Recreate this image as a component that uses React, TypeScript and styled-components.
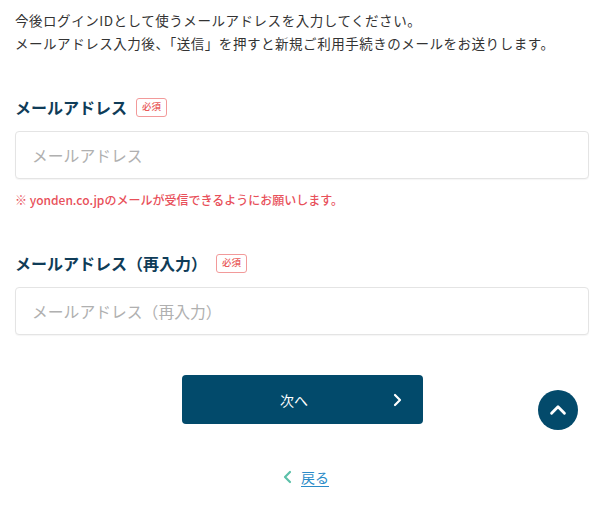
import React from 'react'
import styled, { createGlobalStyle } from 'styled-components'

const GlobalStyle = createGlobalStyle`
    html, body {
        margin: 0;
        padding: 0;
        background: #ffffff;
        font-family: "Noto Sans CJK JP", "Noto Sans", sans-serif;
    }
`

const Page = styled.div`
    position: relative;
    width: 604px;
    height: 512px;
    box-sizing: border-box;
    padding: 9px 15px 0;
    overflow: hidden;
`

const Intro = styled.p`
    margin: 0;
    font-size: 13.5px;
    line-height: 23px;
    letter-spacing: 0.04em;
    color: #333333;
`

const Field = styled.div<{ $top: number }>`
    margin-top: ${(p) => p.$top}px;
`

const LabelRow = styled.div`
    display: flex;
    align-items: center;
    height: 24px;
`

const Label = styled.label`
    font-size: 16px;
    font-weight: 700;
    color: #0f3c58;
    line-height: 24px;
`

const Required = styled.span`
    display: inline-flex;
    align-items: center;
    justify-content: center;
    margin-left: 9px;
    width: 29px;
    height: 17px;
    border: 1px solid #f29a9a;
    border-radius: 3px;
    font-size: 9.5px;
    font-weight: 500;
    color: #e85a5a;
    line-height: 1;
`

const Input = styled.input`
    display: block;
    box-sizing: border-box;
    width: 100%;
    height: 48px;
    margin-top: 12px;
    padding: 0 16px;
    border: 1px solid #e4e4e4;
    border-radius: 4px;
    box-shadow: 0 1px 1px rgba(0, 0, 0, 0.04);
    font-family: inherit;
    font-size: 15.8px;
    color: #333;
    outline: none;

    &::placeholder {
        color: #b0b0b0;
    }
`

const Note = styled.p`
    margin: 12px 0 0;
    font-size: 12px;
    font-weight: 500;
    line-height: 18px;
    color: #e8505a;
`

const Actions = styled.div`
    display: flex;
    flex-direction: column;
    align-items: center;
    margin-top: 40px;
`

const NextButton = styled.button`
    position: relative;
    display: flex;
    align-items: center;
    justify-content: center;
    width: 241px;
    height: 49px;
    padding: 0 16px 0 0;
    border: none;
    border-radius: 4px;
    background: #024a6b;
    color: #ffffff;
    font-family: inherit;
    font-size: 14px;
    cursor: pointer;
`

const ButtonArrow = styled.span`
    position: absolute;
    right: 18px;
    top: 50%;
    transform: translateY(-50%);
    display: flex;
`

const BackLink = styled.a`
    display: flex;
    align-items: center;
    gap: 6px;
    margin-top: 43px;
    margin-left: 6px;
    font-size: 14px;
    line-height: 20px;
    color: #2a8bc8;
    text-decoration: none;

    span {
        text-decoration: underline;
        text-underline-offset: 3px;
    }
`

const PageTop = styled.button`
    position: absolute;
    left: 538px;
    top: 390px;
    width: 40px;
    height: 40px;
    border: none;
    border-radius: 50%;
    background: #034a6b;
    display: flex;
    align-items: center;
    justify-content: center;
    padding: 0;
    cursor: pointer;
`

const Chevron: React.FC<{ dir: 'left' | 'right' | 'up'; color: string; size: number }> = ({ dir, color, size }) => {
    const d = dir === 'right' ? 'M4 2 L9 7 L4 12' : dir === 'left' ? 'M9 2 L4 7 L9 12' : 'M2 9.5 L7 4.5 L12 9.5'
    return (
        <svg width={size} height={size} viewBox="0 0 14 14" fill="none">
            <path d={d} stroke={color} strokeWidth={2.2} strokeLinecap="round" strokeLinejoin="round" />
        </svg>
    )
}

const App: React.FC = () => {
    return (
        <>
            <GlobalStyle />
            <Page>
                <Intro>
                    今後ログインIDとして使うメールアドレスを入力してください。
                    <br />
                    メールアドレス入力後、「送信」を押すと新規ご利用手続きのメールをお送りします。
                </Intro>

                <Field $top={40}>
                    <LabelRow>
                        <Label htmlFor="email">メールアドレス</Label>
                        <Required>必須</Required>
                    </LabelRow>
                    <Input id="email" type="email" placeholder="メールアドレス" />
                    <Note>※ yonden.co.jpのメールが受信できるようにお願いします。</Note>
                </Field>

                <Field $top={42}>
                    <LabelRow>
                        <Label htmlFor="email2">メールアドレス（再入力）</Label>
                        <Required>必須</Required>
                    </LabelRow>
                    <Input id="email2" type="email" placeholder="メールアドレス（再入力）" />
                </Field>

                <Actions>
                    <NextButton type="button">
                        次へ
                        <ButtonArrow>
                            <Chevron dir="right" color="#ffffff" size={14} />
                        </ButtonArrow>
                    </NextButton>
                    <BackLink href="#">
                        <Chevron dir="left" color="#5cc0a9" size={14} />
                        <span>戻る</span>
                    </BackLink>
                </Actions>

                <PageTop type="button" aria-label="ページトップへ">
                    <Chevron dir="up" color="#ffffff" size={18} />
                </PageTop>
            </Page>
        </>
    )
}

export default App
